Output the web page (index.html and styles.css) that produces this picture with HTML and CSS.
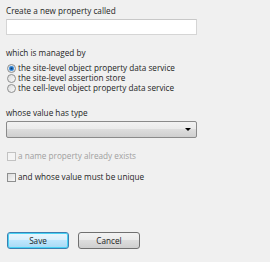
FILE: index.html
```html
<!DOCTYPE html>
<html lang="en">
<head>
    <meta charset="UTF-8">
    <title>New property</title>
    <link rel="stylesheet" href="styles.css">
</head>
<body>
    <form class="dialog">
        <label class="caption" for="name">Create a new property called</label>
        <input type="text" id="name" class="text-input">

        <div class="caption spaced">which is managed by</div>
        <div class="radio-list">
            <label class="option"><input type="radio" name="manager" checked> the site-level object property data service</label>
            <label class="option"><input type="radio" name="manager"> the site-level assertion store</label>
            <label class="option"><input type="radio" name="manager"> the cell-level object property data service</label>
        </div>

        <div class="caption spaced type-caption">whose value has type</div>
        <div class="select-box"><span class="arrow"></span></div>

        <label class="option check disabled"><input type="checkbox" disabled> a name property already exists</label>
        <label class="option check"><input type="checkbox"> and whose value must be unique</label>

        <div class="buttons">
            <button type="submit" class="btn default">Save</button>
            <button type="button" class="btn">Cancel</button>
        </div>
    </form>
</body>
</html>
```

FILE: styles.css
```css
body {
    margin: 0;
    padding: 4px 6px;
    background-color: #f0f0f0;
    color: #1e1e1e;
    font-family: "Open Sans", "Noto Sans", sans-serif;
    font-size: 8.2px;
    line-height: 13px;
}

.dialog {
    width: 191px;
}

.caption {
    display: block;
}

.spaced {
    margin-top: 11px;
}

.type-caption {
    margin-top: 13px;
}

.text-input {
    display: block;
    box-sizing: border-box;
    width: 191px;
    height: 16px;
    margin: 2px 0 0;
    border: 1px solid #d5d5d5;
    border-top-color: #c8c8c8;
    background: #fff;
}

.radio-list {
    margin-top: 4px;
}

.option {
    display: flex;
    align-items: center;
    gap: 2px;
    height: 10px;
    line-height: 10px;
    white-space: nowrap;
}

.option input {
    -webkit-appearance: none;
    appearance: none;
    flex-shrink: 0;
    width: 9px;
    height: 9px;
    margin: 0 0 0 1px;
    box-sizing: border-box;
    border: 1px solid #8e8f8f;
    background: linear-gradient(135deg, #dcdcdc, #f8f8f8);
}

.option input[type="radio"] {
    border-radius: 50%;
}

.option input[type="radio"]:checked {
    background: radial-gradient(circle, #0d3a6b 0, #2a7fd4 35%, #8cc1ee 55%, #e6e6e6 60%);
}

.select-box {
    position: relative;
    box-sizing: border-box;
    width: 191px;
    height: 17px;
    margin-top: 2px;
    border: 1px solid #8a8a8a;
    border-radius: 2px;
    background: linear-gradient(#f2f2f2 0, #ebebeb 45%, #dddddd 50%, #cfcfcf 100%);
}

.arrow {
    position: absolute;
    right: 5px;
    top: 6px;
    border-left: 3px solid transparent;
    border-right: 3px solid transparent;
    border-top: 3px solid #000;
}

.check {
    margin-top: 13px;
}

.check + .check {
    margin-top: 11px;
}

.disabled {
    color: #9f9f9f;
}

.disabled input {
    border-color: #c2c2c2;
    background: #f4f4f4;
}

.buttons {
    display: flex;
    gap: 9px;
    margin-top: 50px;
    padding-left: 1px;
}

.btn {
    width: 62px;
    height: 17px;
    padding: 0;
    border: 1px solid #707070;
    border-radius: 3px;
    background: linear-gradient(#f2f2f2 0, #ebebeb 45%, #dddddd 50%, #cfcfcf 100%);
    color: #1e1e1e;
    font-family: inherit;
    font-size: 8.2px;
}

.btn.default {
    border-color: #3c7fb1;
    box-shadow: inset 0 0 0 1px #48d2f4;
    background: linear-gradient(#eaf6fd 0, #d9f0fc 45%, #bee6fd 50%, #a7d9f5 100%);
}
```
